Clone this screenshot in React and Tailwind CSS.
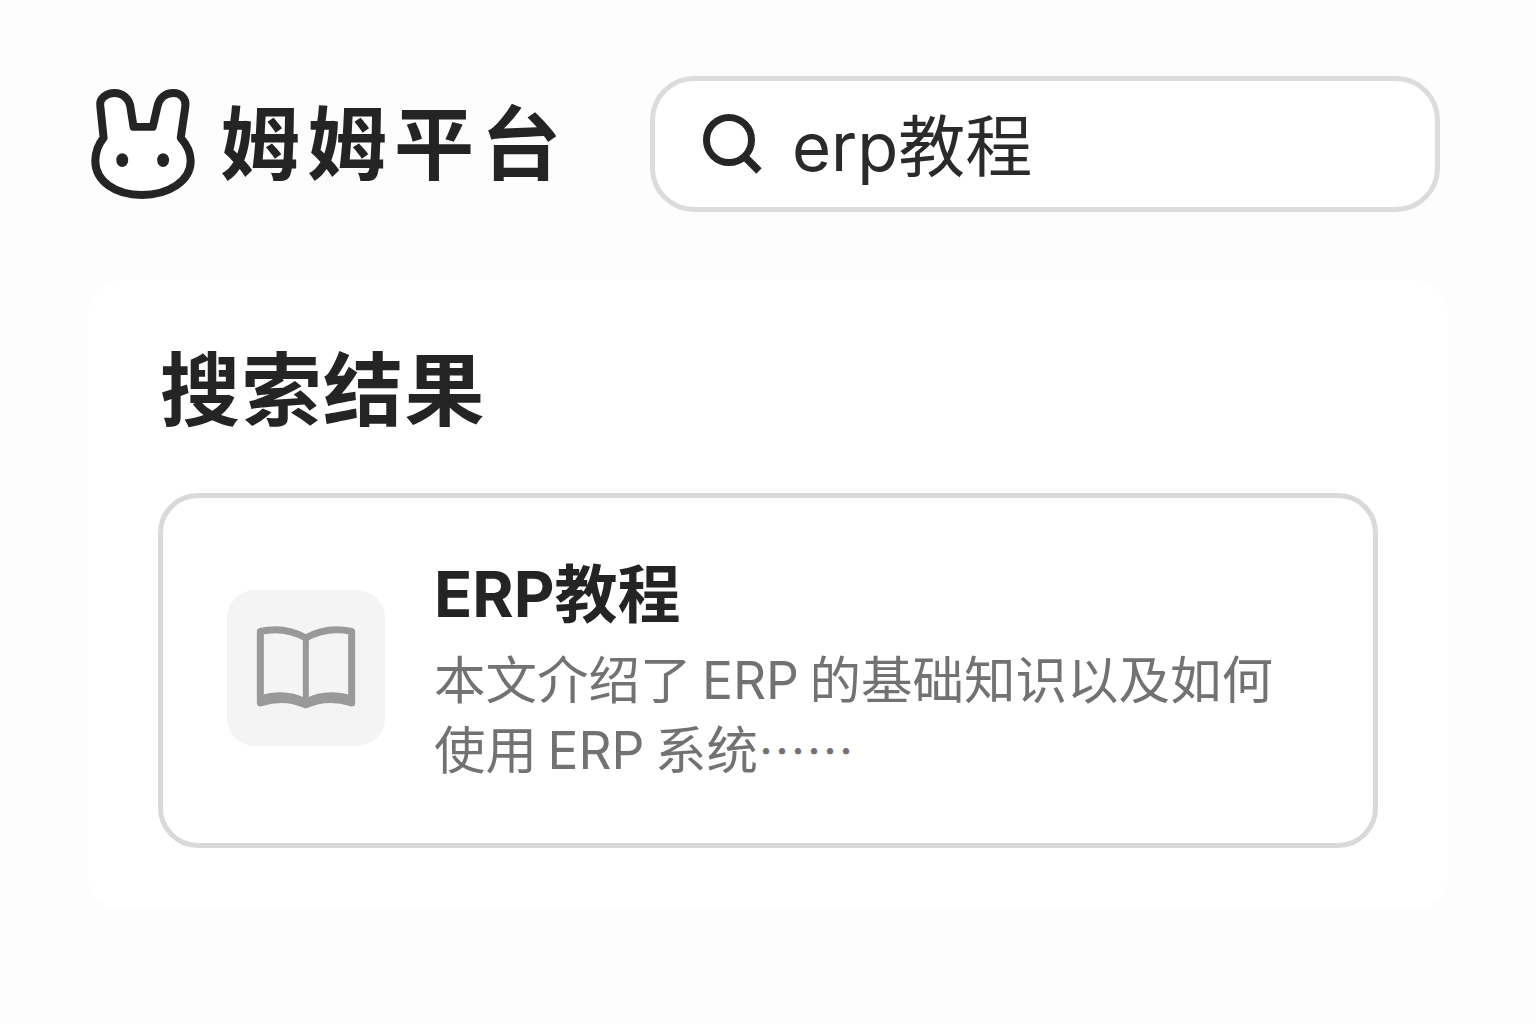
import React from "react";

const FONT = "font-['Inter','Noto_Sans_CJK_SC',sans-serif]";

function RabbitLogo() {
  return (
    <svg viewBox="60 80 320 340" className="h-[113px] w-[107px] shrink-0" fill="none">
      <path
        d="M100 230 L90 135 C86 112 108 95 132 95 C158 95 178 112 181 140 L190 197 L248 197 L262 135 C268 110 285 95 310 95 C333 95 349 112 346 135 L332 230 C350 250 362 272 362 300 C362 360 295 402 215 402 C135 402 75 360 75 300 C75 272 84 250 100 230 Z"
        fill="#ffffff"
        stroke="#242424"
        strokeWidth="24"
        strokeLinejoin="round"
      />
      <ellipse cx="156" cy="297" rx="18" ry="21" fill="#242424" />
      <ellipse cx="279" cy="297" rx="18" ry="21" fill="#242424" />
    </svg>
  );
}

function BookIcon() {
  return (
    <svg viewBox="310 190 320 260" className="h-[87px] w-[107px]" fill="none">
      <path
        d="M332 212 C380 202 430 210 468 232 C506 210 556 202 605 212 L605 426 C556 410 506 414 468 432 C430 414 380 410 332 426 Z"
        stroke="#999999"
        strokeWidth="21"
        strokeLinejoin="round"
      />
      <path d="M468 232 L468 432" stroke="#999999" strokeWidth="18" />
      <path
        d="M332 404 C380 388 430 392 468 412 C506 392 556 388 605 404 L605 430 C556 414 506 418 468 438 C430 418 380 414 332 430 Z"
        fill="#999999"
      />
    </svg>
  );
}

export default function App() {
  return (
    <div className={`min-h-[1024px] bg-[#fdfdfd] pt-[76px] ${FONT}`}>
      <header className="flex items-center pl-[90px] pr-[96px]">
        <RabbitLogo />
        <div className="ml-[23px] w-[338px] text-[80px] leading-none font-bold tracking-[7px] whitespace-nowrap text-[#242424]">
          姆姆平台
        </div>
        <div className="ml-[92px] flex h-[136px] flex-1 items-center rounded-[44px] border-[5px] border-[#dcdcdc] bg-white pl-[47px]">
          <svg viewBox="0 0 60 62" className="h-[62px] w-[60px] shrink-0" fill="none" stroke="#262626" strokeWidth="7">
            <circle cx="27" cy="27" r="22.5" />
            <path d="M43 44 L57 58" strokeWidth="7.5" />
          </svg>
          <span className="mt-[5px] ml-[30px] text-[67px] leading-none text-[#2a2a2a]">erp教程</span>
        </div>
      </header>

      <main className="mx-[88px] mt-[68px] h-[630px] rounded-[36px] bg-white pt-[68px] pr-[70px] pl-[70px]">
        <h2 className="ml-[2px] text-[80px] leading-[84px] font-bold tracking-[1.5px] text-[#242424]">搜索结果</h2>
        <div className="mt-[61px] flex h-[355px] items-center rounded-[40px] border-[5px] border-[#d9d9d9] bg-white pl-[64px]">
          <div className="mb-[6px] flex h-[156px] w-[158px] shrink-0 items-center justify-center rounded-[28px] bg-[#f4f4f4]">
            <BookIcon />
          </div>
          <div className="ml-[49px] w-[880px]">
            <div className="text-[63px] leading-[72px] font-bold text-[#242424]">ERP教程</div>
            <p className="mt-[16px] text-[51.5px] leading-[68px] text-[#727272] [word-spacing:-4px]">
              本文介绍了 ERP 的基础知识以及如何
              <br />
              使用 ERP 系统
              <span lang="zh-CN" className="font-['Noto_Sans_CJK_SC',sans-serif] text-[48px]">
                ……
              </span>
            </p>
          </div>
        </div>
      </main>
    </div>
  );
}
